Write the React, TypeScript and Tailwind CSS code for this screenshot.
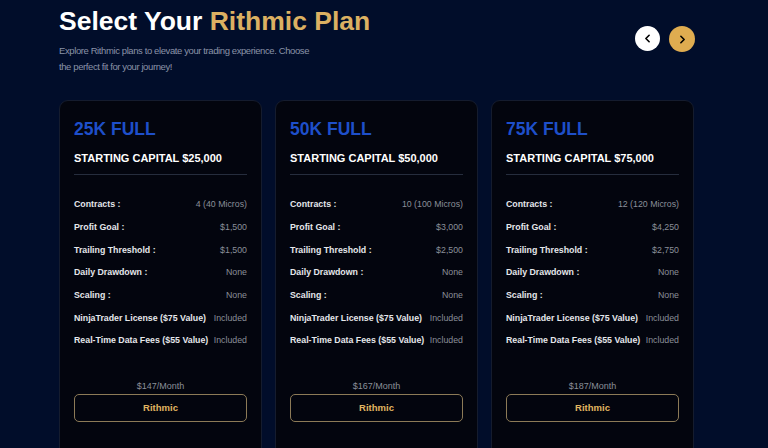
import { ChevronLeft, ChevronRight } from "lucide-react";

interface Plan {
  name: string;
  capital: string;
  contracts: string;
  profit: string;
  trailing: string;
  price: string;
}

const plans: Plan[] = [
  { name: "25K FULL", capital: "$25,000", contracts: "4 (40 Micros)", profit: "$1,500", trailing: "$1,500", price: "$147/Month" },
  { name: "50K FULL", capital: "$50,000", contracts: "10 (100 Micros)", profit: "$3,000", trailing: "$2,500", price: "$167/Month" },
  { name: "75K FULL", capital: "$75,000", contracts: "12 (120 Micros)", profit: "$4,250", trailing: "$2,750", price: "$187/Month" },
];

function PlanCard({ plan }: { plan: Plan }) {
  const rows: [string, string][] = [
    ["Contracts :", plan.contracts],
    ["Profit Goal :", plan.profit],
    ["Trailing Threshold :", plan.trailing],
    ["Daily Drawdown :", "None"],
    ["Scaling :", "None"],
    ["NinjaTrader License ($75 Value)", "Included"],
    ["Real-Time Data Fees ($55 Value)", "Included"],
  ];

  return (
    <div className="w-[203px] h-[360px] shrink-0 rounded-[9px] border border-[#151c2e] bg-[#03050e] px-[14px] pt-[17px]">
      <h3 className="text-[17.5px] leading-[22px] font-bold text-[#1e4fca]">{plan.name}</h3>
      <p className="mt-[11px] text-[11px] leading-[14px] font-bold whitespace-nowrap text-white">
        STARTING CAPITAL {plan.capital}
      </p>
      <div className="mt-[9px] h-px bg-[#262d3d]" />
      <div className="mt-[18px] flex flex-col">
        {rows.map(([label, value]) => (
          <div key={label} className="flex h-[22.7px] items-center justify-between whitespace-nowrap text-[8.8px] leading-[12px]">
            <span className="font-bold text-[#e5e7eb]">{label}</span>
            <span className="text-[#8a8f99]">{value}</span>
          </div>
        ))}
      </div>
      <p className="mt-[28px] text-center text-[9px] leading-[12px] text-[#8a8f99]">{plan.price}</p>
      <button className="mt-[2px] h-[28px] w-full rounded-[5px] border border-[#8c7a57] text-[9.5px] font-bold text-[#e0b561]">
        Rithmic
      </button>
    </div>
  );
}

export default function App() {
  return (
    <div
      className="h-[448px] w-[768px] overflow-hidden bg-[#010d2a] pl-[59px]"
      style={{ fontFamily: '"Liberation Sans", Arial, sans-serif' }}
    >
      <div className="flex w-[636px] items-start justify-between pt-[4px]">
        <div>
          <h1 className="text-[26.5px] leading-[34px] font-bold text-white">
            Select Your <span className="text-[#dcb062]">Rithmic Plan</span>
          </h1>
          <p className="mt-[5px] w-[262px] text-[9.5px] leading-[16px] tracking-[-0.4px] text-[#8a93a8]">
            Explore Rithmic plans to elevate your trading experience. Choose the perfect fit for your journey!
          </p>
        </div>
        <div className="mt-[22px] flex gap-[9px]">
          <button className="flex h-[25px] w-[25px] items-center justify-center rounded-full bg-white text-black">
            <ChevronLeft size={13} strokeWidth={3} />
          </button>
          <button className="flex h-[26px] w-[26px] items-center justify-center rounded-full bg-[#dfac50] text-black">
            <ChevronRight size={13} strokeWidth={3} />
          </button>
        </div>
      </div>
      <div className="mt-[25px] flex gap-[13px]">
        {plans.map((p) => (
          <PlanCard key={p.name} plan={p} />
        ))}
      </div>
    </div>
  );
}
